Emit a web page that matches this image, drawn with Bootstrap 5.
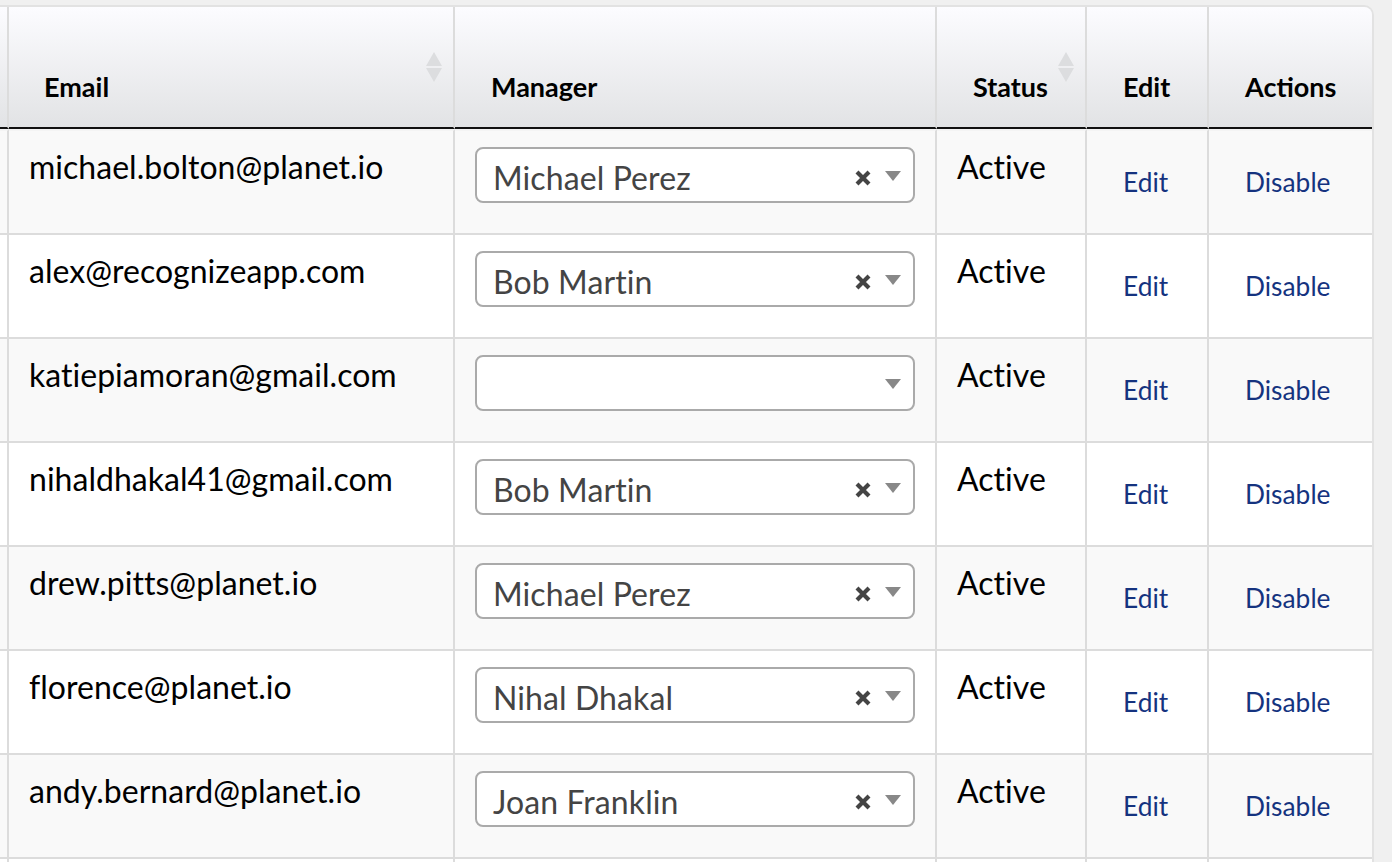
<!doctype html>
<html lang="en">
<head>
<meta charset="utf-8">
<title>Users</title>
<link href="https://cdn.jsdelivr.net/npm/bootstrap@5.3.0/dist/css/bootstrap.min.css" rel="stylesheet">
<style>
html,body{height:100%;overflow:hidden;background:#f0f0f0;}
body{font-family:Lato,"Liberation Sans",sans-serif;color:#000;}
.shell{padding-top:5px;width:1374px;}
.sheet{border:solid #e2e2e2;border-width:2px 2px 0 0;border-top-right-radius:10px;overflow:hidden;}
.grid-t{table-layout:fixed;width:1372px;border-collapse:separate;border-spacing:0;margin:0;}
.grid-t th,.grid-t td{border-right:2px solid #dcdcdc;border-bottom:2px solid #dcdcdc;padding:0;color:#000;}
.grid-t tr>*:last-child{border-right:0;}
.grid-t th{height:122px;vertical-align:bottom;background:linear-gradient(#fcfcff,#e2e3e5);border-bottom:2px solid #111;font-size:27px;line-height:32px;font-weight:700;padding-bottom:24px;position:relative;}
.grid-t td{height:104px;vertical-align:top;font-size:32px;line-height:40px;padding-top:16px;letter-spacing:.03px;}
.grid-t tbody tr:first-child td{height:106px;border-top:2px solid #f4f4f4;}
.grid-t tbody tr:nth-child(odd) td{background:#f9f9f9;}
.grid-t tbody tr:nth-child(even) td{background:#fff;}
.hd-mail{padding-left:35px!important;}.hd-mgr{padding-left:36px!important;}.hd-stat{padding-left:36px!important;}.hd-edit{padding-left:36px!important;}.hd-act{padding-left:36px!important;}
.c-mail{padding-left:20px!important;}.c-stat{padding-left:20px!important;}
.c-mgr{padding-left:20px!important;padding-top:16px!important;}
.c-link{font-size:26.3px!important;padding-top:35px!important;line-height:32px!important;}
.c-edit{padding-left:36px!important;}.c-act{padding-left:36px!important;}
.c-link a{color:#15337f;text-decoration:none;}
.sorter{position:absolute;top:45px;width:18px;height:30px;}
.picker{width:440px;height:56px;background:#fff;border:2px solid #aaa;border-radius:8px;padding:0 12px 0 16px;color:#444;font-size:32px;line-height:56px;}
.picker-name{flex:1 1 auto;white-space:nowrap;padding-top:5px;line-height:50px;letter-spacing:.1px;}
.picker svg{display:block;flex:none;}
.picker-x{margin:6px 13px 0 0;}
.picker-arrow{margin-top:1px;}
</style>
</head>
<body>
<div class="shell">
<div class="sheet">
<table class="table grid-t">
<colgroup><col style="width:9px"><col style="width:446px"><col style="width:482px"><col style="width:150px"><col style="width:122px"><col></colgroup>
<thead><tr>
<th></th>
<th class="hd-mail">Email<svg class="sorter" style="right:10px" viewBox="0 0 18 30"><path d="M9 0 17 14H1Z M1 16H17L9 30Z" fill="#dcdddf"/></svg></th>
<th class="hd-mgr">Manager</th>
<th class="hd-stat">Status<svg class="sorter" style="right:10px" viewBox="0 0 18 30"><path d="M9 0 17 14H1Z M1 16H17L9 30Z" fill="#dcdddf"/></svg></th>
<th class="hd-edit">Edit</th>
<th class="hd-act">Actions</th>
</tr></thead>
<tbody id="rows">
<tr><td></td><td class="c-mail">michael.bolton@planet.io</td><td class="c-mgr"><div class="picker d-flex align-items-center"><span class="picker-name">Michael Perez</span><svg class="picker-x" width="18" height="18" viewBox="0 0 18 18"><path d="M3 3 15 15M15 3 3 15" stroke="#444" stroke-width="4.2"/></svg><svg class="picker-arrow" width="16" height="10" viewBox="0 0 16 10"><path d="M0 0H16L8 10Z" fill="#888"/></svg></div></td><td class="c-stat">Active</td><td class="c-link c-edit"><a href="#">Edit</a></td><td class="c-link c-act"><a href="#">Disable</a></td></tr>
<tr><td></td><td class="c-mail">alex@recognizeapp.com</td><td class="c-mgr"><div class="picker d-flex align-items-center"><span class="picker-name">Bob Martin</span><svg class="picker-x" width="18" height="18" viewBox="0 0 18 18"><path d="M3 3 15 15M15 3 3 15" stroke="#444" stroke-width="4.2"/></svg><svg class="picker-arrow" width="16" height="10" viewBox="0 0 16 10"><path d="M0 0H16L8 10Z" fill="#888"/></svg></div></td><td class="c-stat">Active</td><td class="c-link c-edit"><a href="#">Edit</a></td><td class="c-link c-act"><a href="#">Disable</a></td></tr>
<tr><td></td><td class="c-mail">katiepiamoran@gmail.com</td><td class="c-mgr"><div class="picker d-flex align-items-center"><span class="picker-name"></span><svg class="picker-arrow" width="16" height="10" viewBox="0 0 16 10"><path d="M0 0H16L8 10Z" fill="#888"/></svg></div></td><td class="c-stat">Active</td><td class="c-link c-edit"><a href="#">Edit</a></td><td class="c-link c-act"><a href="#">Disable</a></td></tr>
<tr><td></td><td class="c-mail">nihaldhakal41@gmail.com</td><td class="c-mgr"><div class="picker d-flex align-items-center"><span class="picker-name">Bob Martin</span><svg class="picker-x" width="18" height="18" viewBox="0 0 18 18"><path d="M3 3 15 15M15 3 3 15" stroke="#444" stroke-width="4.2"/></svg><svg class="picker-arrow" width="16" height="10" viewBox="0 0 16 10"><path d="M0 0H16L8 10Z" fill="#888"/></svg></div></td><td class="c-stat">Active</td><td class="c-link c-edit"><a href="#">Edit</a></td><td class="c-link c-act"><a href="#">Disable</a></td></tr>
<tr><td></td><td class="c-mail">drew.pitts@planet.io</td><td class="c-mgr"><div class="picker d-flex align-items-center"><span class="picker-name">Michael Perez</span><svg class="picker-x" width="18" height="18" viewBox="0 0 18 18"><path d="M3 3 15 15M15 3 3 15" stroke="#444" stroke-width="4.2"/></svg><svg class="picker-arrow" width="16" height="10" viewBox="0 0 16 10"><path d="M0 0H16L8 10Z" fill="#888"/></svg></div></td><td class="c-stat">Active</td><td class="c-link c-edit"><a href="#">Edit</a></td><td class="c-link c-act"><a href="#">Disable</a></td></tr>
<tr><td></td><td class="c-mail">florence@planet.io</td><td class="c-mgr"><div class="picker d-flex align-items-center"><span class="picker-name">Nihal Dhakal</span><svg class="picker-x" width="18" height="18" viewBox="0 0 18 18"><path d="M3 3 15 15M15 3 3 15" stroke="#444" stroke-width="4.2"/></svg><svg class="picker-arrow" width="16" height="10" viewBox="0 0 16 10"><path d="M0 0H16L8 10Z" fill="#888"/></svg></div></td><td class="c-stat">Active</td><td class="c-link c-edit"><a href="#">Edit</a></td><td class="c-link c-act"><a href="#">Disable</a></td></tr>
<tr><td></td><td class="c-mail">andy.bernard@planet.io</td><td class="c-mgr"><div class="picker d-flex align-items-center"><span class="picker-name">Joan Franklin</span><svg class="picker-x" width="18" height="18" viewBox="0 0 18 18"><path d="M3 3 15 15M15 3 3 15" stroke="#444" stroke-width="4.2"/></svg><svg class="picker-arrow" width="16" height="10" viewBox="0 0 16 10"><path d="M0 0H16L8 10Z" fill="#888"/></svg></div></td><td class="c-stat">Active</td><td class="c-link c-edit"><a href="#">Edit</a></td><td class="c-link c-act"><a href="#">Disable</a></td></tr>
<tr><td></td><td></td><td></td><td></td><td></td><td></td></tr>
</tbody>
</table>
</div>
</div>
<script src="https://cdn.jsdelivr.net/npm/bootstrap@5.3.0/dist/js/bootstrap.bundle.min.js"></script>
</body>
</html>
